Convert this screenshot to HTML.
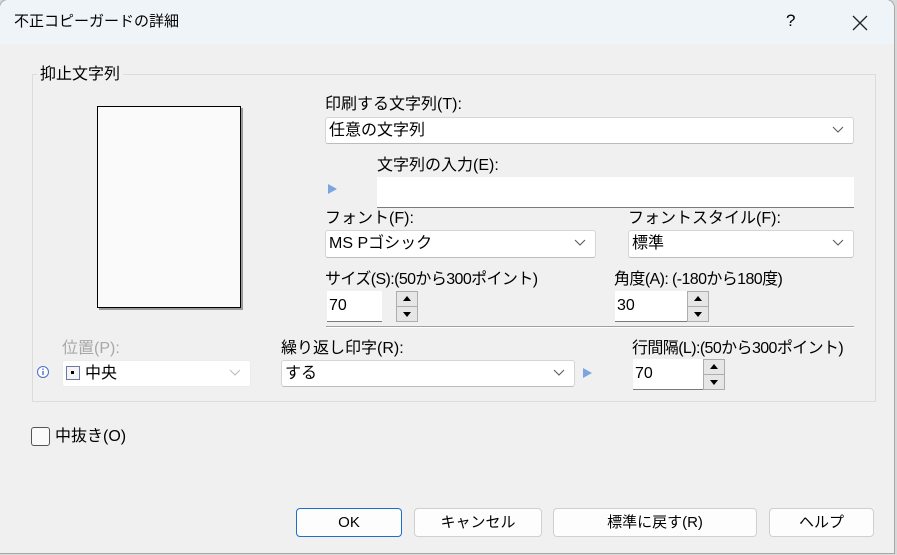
<!DOCTYPE html>
<html><head><meta charset="utf-8"><style>
*{box-sizing:border-box;margin:0;padding:0}
body{width:897px;height:555px;background:#d8d8d8;position:relative;overflow:hidden;font-family:"Liberation Sans","Noto Sans CJK JP",sans-serif;font-size:16px;color:#000}
.win{position:absolute;left:0;top:0;width:894px;height:553px;background:#f0f0f0;box-shadow:0 0 0 1px #a8a8a8;border-radius:8px 8px 0 0;overflow:hidden}
.title{position:absolute;left:0;top:0;right:0;height:44px;background:#eff4f9}
.a{position:absolute;white-space:nowrap;line-height:18px}
.n{letter-spacing:-0.6px}
.combo{position:absolute;background:#fff;border:1px solid #d5d5d5;border-bottom-color:#bcbcbc;border-radius:3px}
.combo span{position:absolute;left:3px;top:4px;line-height:18px}
.chev{position:absolute;right:9px;top:8px;width:12px;height:8px}
.inp{position:absolute;background:#fff;border-bottom:1px solid #7a7a7a}
.spin{position:absolute;width:22px;border:1px solid #adadad;background:#e6e6e6}
.spin div{height:50%;border-bottom:1px solid #adadad;position:relative}
.spin div:last-child{border-bottom:0}
.up:after{content:"";position:absolute;left:6px;top:4px;border:4px solid transparent;border-bottom:5px solid #000;border-top:0}
.dn:after{content:"";position:absolute;left:6px;top:5px;border:4px solid transparent;border-top:5px solid #000;border-bottom:0}
.btn{position:absolute;top:508px;height:29px;background:#fdfdfd;border:1px solid #d0d0d0;border-radius:4px;text-align:center;line-height:27px;font-size:15px}
.tri{position:absolute;width:0;height:0;border-top:5px solid transparent;border-bottom:5px solid transparent;border-left:9px solid #7aa5e0}
u{text-decoration:none}
</style></head><body>
<div class="win">
<div class="title"></div>
<div class="a" style="left:14px;top:13px;font-size:15px">不正コピーガードの詳細</div>
<div class="a" style="left:786px;top:12px;font-size:17px">?</div>
<svg style="position:absolute;left:852px;top:15px" width="16" height="16"><path d="M1 1L15 15M15 1L1 15" stroke="#222" stroke-width="1.3"/></svg>

<div style="position:absolute;left:32px;top:74px;width:844px;height:328px;border:1px solid #dcdcdc"></div>
<div class="a" style="left:37px;top:66px;background:#f0f0f0;padding:0 3px">抑止文字列</div>
<div style="position:absolute;left:97px;top:106px;width:144px;height:202px;background:#fafafa;border:1px solid #000;box-shadow:2px 2px 0 #9a9a9a"></div>

<div class="a" style="left:325px;top:96px">印刷する文字列<u>(T)</u>:</div>
<div class="combo" style="left:325px;top:117px;width:529px;height:27px"><span>任意の文字列</span><svg class="chev" viewBox="0 0 12 8"><path d="M1 1L6 6L11 1" fill="none" stroke="#555"/></svg></div>
<div class="a" style="left:377px;top:157px">文字列の入力<u>(E)</u>:</div>
<div class="tri" style="left:328px;top:184px"></div>
<div class="inp" style="left:377px;top:177px;width:477px;height:31px"></div>

<div class="a" style="left:325px;top:210px">フォント<u>(F)</u>:</div>
<div class="combo" style="left:325px;top:230px;width:271px;height:28px"><span>MS Pゴシック</span><svg class="chev" viewBox="0 0 12 8"><path d="M1 1L6 6L11 1" fill="none" stroke="#555"/></svg></div>
<div class="a" style="left:628px;top:210px">フォントスタイル<u>(F)</u>:</div>
<div class="combo" style="left:628px;top:230px;width:226px;height:28px"><span>標準</span><svg class="chev" viewBox="0 0 12 8"><path d="M1 1L6 6L11 1" fill="none" stroke="#555"/></svg></div>

<div class="a n" style="left:325px;top:271px">サイズ<u>(S)</u>:(50から300ポイント)</div>
<div class="inp" style="left:327px;top:291px;width:55px;height:31px"><span class="a" style="left:2px;top:6px">70</span></div>
<div class="spin" style="left:396px;top:291px;height:31px"><div class="up"></div><div class="dn"></div></div>
<div class="a n" style="left:614px;top:271px">角度<u>(A)</u>: (-180から180度)</div>
<div class="inp" style="left:615px;top:291px;width:72px;height:31px"><span class="a" style="left:2px;top:6px">30</span></div>
<div class="spin" style="left:687px;top:291px;height:31px"><div class="up"></div><div class="dn"></div></div>
<div style="position:absolute;left:326px;top:326px;width:528px;height:2px;background:#a0a0a0;border-bottom:1px solid #fff"></div>

<div class="a" style="left:62px;top:340px;color:#a8a8a8">位置(P):</div>
<svg style="position:absolute;left:36px;top:365px" width="14" height="14"><circle cx="7" cy="7" r="5.5" fill="#fff" stroke="#4a6fc8"/><rect x="6.3" y="6" width="1.4" height="4" fill="#4a6fc8"/><rect x="6.3" y="3.5" width="1.4" height="1.4" fill="#4a6fc8"/></svg>
<div class="combo" style="left:62px;top:360px;width:189px;height:27px;border-color:#ececec"><div style="position:absolute;left:3px;top:5px;width:14px;height:14px;border:1px solid #6a7aa8;background:#f4f4f4"><div style="position:absolute;left:4px;top:4px;width:3px;height:3px;background:#000"></div></div><span style="left:22px">中央</span><svg class="chev" viewBox="0 0 12 8"><path d="M1 1L6 6L11 1" fill="none" stroke="#bbb"/></svg></div>

<div class="a" style="left:281px;top:340px">繰り返し印字<u>(R)</u>:</div>
<div class="combo" style="left:281px;top:360px;width:294px;height:27px"><span>する</span><svg class="chev" viewBox="0 0 12 8"><path d="M1 1L6 6L11 1" fill="none" stroke="#555"/></svg></div>
<div class="tri" style="left:583px;top:368px"></div>
<div class="a n" style="left:632px;top:340px">行間隔<u>(L)</u>:(50から300ポイント)</div>
<div class="inp" style="left:633px;top:359px;width:70px;height:31px"><span class="a" style="left:2px;top:6px">70</span></div>
<div class="spin" style="left:703px;top:359px;height:31px"><div class="up"></div><div class="dn"></div></div>

<div style="position:absolute;left:31px;top:427px;width:19px;height:19px;border:1px solid #555;border-radius:3px;background:#fafafa"></div>
<div class="a" style="left:55px;top:428px">中抜き<u>(O)</u></div>

<div class="btn" style="left:296px;width:106px;border-color:#1a6fd0">OK</div>
<div class="btn" style="left:414px;width:128px">キャンセル</div>
<div class="btn" style="left:553px;width:204px">標準に戻す<u>(R)</u></div>
<div class="btn" style="left:769px;width:105px">ヘルプ</div>
</div>
</body></html>
